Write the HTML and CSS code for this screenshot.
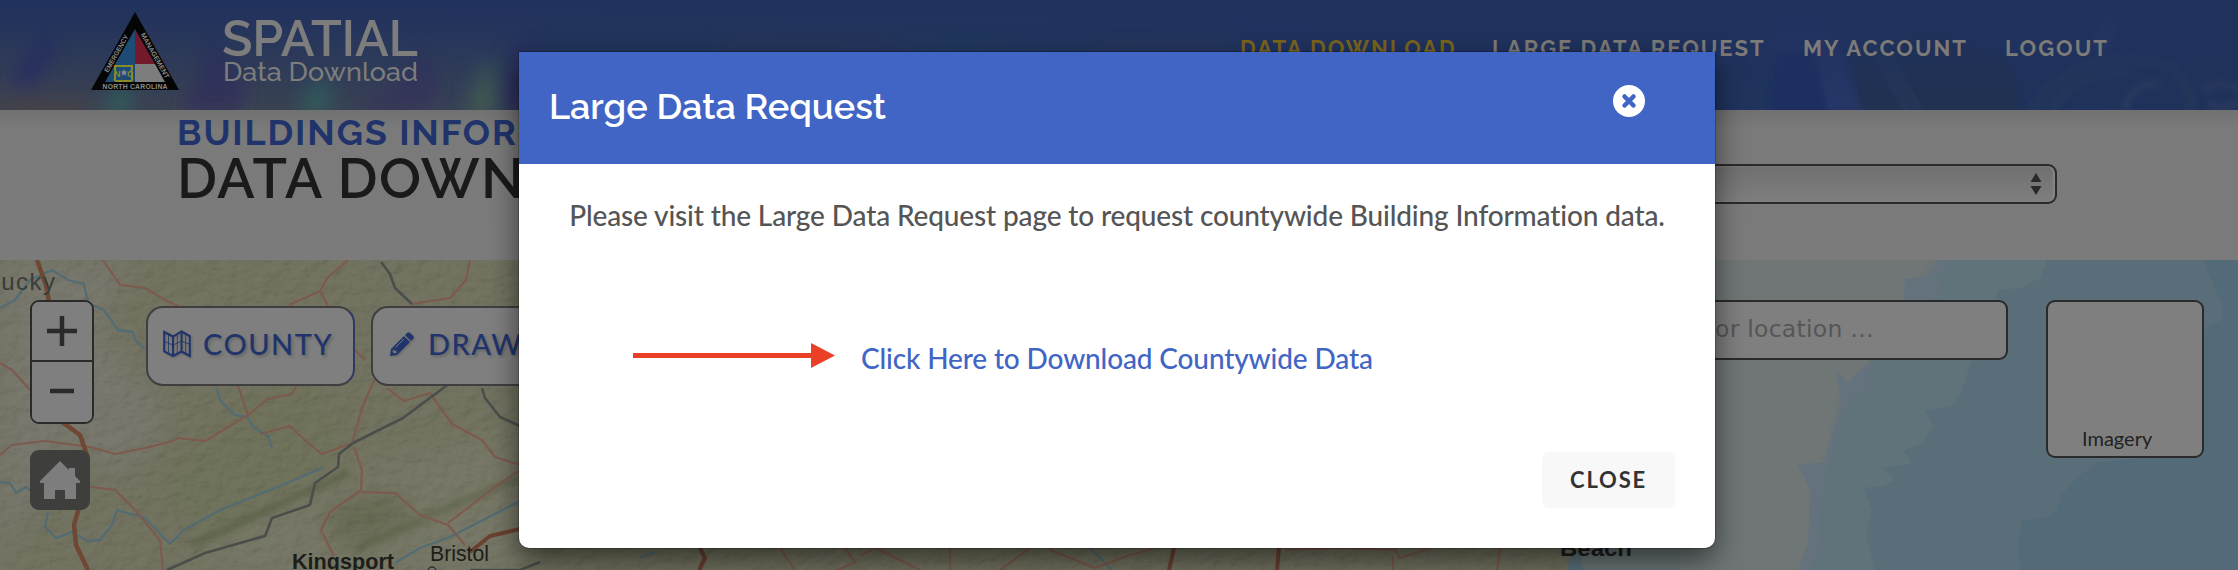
FILE: index.html
```html
<!DOCTYPE html>
<html lang="en">
<head>
<meta charset="utf-8">
<title>Spatial Data Download</title>
<link rel="stylesheet" href="styles.css">
</head>
<body>
<div class="page">
  <header class="site-header">
    <svg class="header-art" viewBox="0 0 2238 110" preserveAspectRatio="none" aria-hidden="true">
      <defs>
        <filter id="soft"><feGaussianBlur stdDeviation="9"/></filter>
        <filter id="soft2"><feGaussianBlur stdDeviation="3"/></filter>
        <linearGradient id="tint" x1="0" y1="0" x2="0" y2="1">
          <stop offset="0" stop-color="#20315e"/><stop offset=".25" stop-color="#20315e" stop-opacity=".8"/><stop offset="1" stop-color="#20315e" stop-opacity="0"/>
        </linearGradient>
        <linearGradient id="base" x1="0" x2="1">
          <stop offset="0" stop-color="#3c4350"/><stop offset=".2" stop-color="#384254"/><stop offset=".4" stop-color="#283e5a"/><stop offset=".53" stop-color="#1f3560"/><stop offset="1" stop-color="#20325a"/>
        </linearGradient>
      </defs>
      <rect width="2238" height="110" fill="url(#base)"/>
      <g filter="url(#soft)">
        <path d="M10 80L45 25L60 45L30 90Z" fill="#2d2d60"/>
        <path d="M0 95H90V120H0Z" fill="#44434a"/>
        <path d="M100 112L118 84L134 84L128 112Z" fill="#31605c"/>
        <path d="M180 112L205 60L210 25L245 80L240 112Z" fill="#363158"/>
        <path d="M300 112L312 78L334 86L325 112Z" fill="#31605c"/>
        <path d="M350 112L390 90L420 40L440 85L425 112Z" fill="#383558"/>
        <path d="M468 112L480 62L496 60L494 112Z" fill="#446150"/>
        <path d="M500 112L512 40L540 30L535 112Z" fill="#2f2f5e"/>
        <path d="M540 20H720V60H540Z" fill="#233c59"/>
        <path d="M720 30H900V60H720Z" fill="#2b3b57"/>
        <path d="M930 30H1000V60H930Z" fill="#21405a"/>
        <path d="M1100 30H1230V60H1100Z" fill="#293c57"/>
      </g>
      <g filter="url(#soft2)">
        <path d="M1775 112L1768 0L1820 0L1862 112Z" fill="#27386b" opacity=".7"/>
        <path d="M1774 50L1815 50L1828 112H1770Z" fill="#1b2d60"/>
        <path d="M1850 50L1935 30L2010 60L2020 112H1862Z" fill="#23314e" opacity=".8"/>
        <path d="M1885 50L1920 112M1870 40L1908 112" stroke="#293b5c" stroke-width="4" fill="none"/>
        <path d="M2092 45L2102 17L2120 20L2106 50Z" fill="#2e3d6a"/>
        <path d="M2030 112Q2080 40 2170 66Q2195 90 2190 112M2050 112Q2080 66 2130 72" stroke="#293a59" stroke-width="8" fill="none" opacity=".6"/>
        <path d="M2125 112Q2130 80 2160 85M2204 90Q2220 78 2240 90M2208 104Q2220 112 2240 102" stroke="#2d3d5d" stroke-width="5" fill="none"/>
      </g>
      <rect width="2238" height="110" fill="url(#tint)"/>
    </svg>
    <div class="brand">
      <svg class="seal" viewBox="0 0 88 78" role="img" aria-label="North Carolina Emergency Management">
        <path d="M44 0L88 78H0Z" fill="#050505"/>
        <path d="M44 17V70H14Z" fill="#1c4c75"/>
        <path d="M44 17V52H64Z" fill="#72192b"/>
        <path d="M44 52H64L74 70H44Z" fill="#7d7d7d"/>
        <path d="M24 54h17v2q-1 3 0 5v5q1 2-1 3h-15q-2-1-1-3v-4q1-3 0-5z" fill="none" stroke="#8b8b28" stroke-width="2"/>
        <text class="seal-nc" x="23" y="64.500">N</text><text class="seal-nc" x="36" y="64.500">C</text>
        <path d="M33 57l1 2.500h2.500l-2 1.600.8 2.600-2.300-1.500-2.300 1.500.8-2.600-2-1.600h2.500z" fill="#8d8d8d"/>
        <text class="seal-text" x="11.500" y="76.500" textLength="65">NORTH CAROLINA</text>
        <text class="seal-text" transform="translate(17 61) rotate(-60.500)" textLength="42" lengthAdjust="spacingAndGlyphs">EMERGENCY</text>
        <text class="seal-text" transform="translate(49.500 22.500) rotate(60.500)" textLength="51" lengthAdjust="spacingAndGlyphs">MANAGEMENT</text>
      </svg>
      <div class="wordmark"><span class="wordmark-top">SPATIAL</span><span class="wordmark-sub">Data Download</span></div>
    </div>
    <nav class="site-nav">
      <a class="nav-link nav-link-active n1">DATA DOWNLOAD</a>
      <a class="nav-link n2">LARGE DATA REQUEST</a>
      <a class="nav-link n3">MY ACCOUNT</a>
      <a class="nav-link n4">LOGOUT</a>
    </nav>
  </header>

  <section class="title-bar">
    <div class="titles"><h2 class="kicker">BUILDINGS INFORMATION</h2><h1 class="headline">DATA DOWNLOAD</h1></div>
    <div class="picker">
      <svg class="picker-arrows" viewBox="0 0 12 24"><path d="M6 1L11.500 10H.5ZM6 23L11.500 14H.5Z" fill="#2a2a2a"/></svg>
    </div>
  </section>

  <main class="map">
    <svg class="map-art" viewBox="0 260 2238 310" aria-hidden="true">
      <defs>
        <filter id="relief" x="0" y="0" width="1" height="1">
          <feTurbulence type="fractalNoise" baseFrequency=".07 .1" numOctaves="4" seed="8"/>
          <feDiffuseLighting surfaceScale="3" lighting-color="#fff"><feDistantLight azimuth="225" elevation="50"/></feDiffuseLighting>
          <feColorMatrix type="saturate" values="0"/>
        </filter>
        <filter id="haze"><feGaussianBlur stdDeviation="14"/></filter>
        <filter id="ridge"><feGaussianBlur stdDeviation="3"/></filter>
        <filter id="edge"><feGaussianBlur stdDeviation=".7"/></filter>
      </defs>
      <rect y="260" width="1700" height="310" fill="#646550"/>
      <g filter="url(#haze)">
        <path d="M0 260H130L100 330L170 420L120 480L60 440L0 570Z" fill="#6b6b5e"/>
        <path d="M230 400L320 360L350 480L200 560L160 480Z" fill="#62654c"/>
        <path d="M170 570L350 470L520 430V570Z" fill="#6a6a59"/>
        <path d="M320 510L390 490L420 520L340 550Z" fill="#545b41"/>
      </g>
      <rect y="260" width="1700" height="310" filter="url(#relief)" opacity=".1"/>
      <g fill="none" stroke-linejoin="round">
        <g filter="url(#ridge)" stroke="#535a3d" stroke-width="6">
          <path d="M190 545L300 495L350 472" opacity=".7"/>
          <path d="M355 550L430 515L520 478" opacity=".6"/>
        </g>
        <g filter="url(#edge)">
          <g stroke="#536c73" stroke-width="2.300">
            <path d="M0 308L15 300L30 280L52 270L68 280L84 284L88 303L104 310L118 330L133 332L135 340L145 349"/>
            <path d="M217 388L220 400L235 415L247 417L254 428L268 436L272 448"/>
            <path d="M0 482L10 483L16 493L26 487L34 494M48 512L45 527L56 538L72 532L88 541L100 540L112 525L117 510L145 518L170 544L184 530L220 510L270 490L323 468"/>
            <path d="M395 563L420 548L450 537L520 501M640 558L655 552M1090 548L1112 570"/>
          </g>
          <g stroke="#7d5a4d" stroke-width="2.200">
            <path d="M103 260L120 285L145 288L165 300L180 307M348 260L328 277L320 291L289 305M320 291L328 306M470 260L466 280L450 298L412 304"/>
            <path d="M0 363L12 370L32 392M0 455L12 445L45 441L90 447L115 454L145 448L173 441L178 438L205 441L248 415L268 399L292 394L300 380M238 386L248 415M90 487L115 490L135 510L160 540L163 570"/>
            <path d="M260 434L290 426L308 443L322 454L352 443L362 408L374 380M354 447L362 470L361 490L330 512L321 530L334 556M361 492L395 493L420 515L448 525L465 545M387 388L404 401L430 393L452 424L482 440L495 457L520 465M520 470L495 487L448 523M355 350L365 360"/>
            <path d="M780 548L795 570M845 548L855 562L838 570M860 556L875 548L920 570M1000 570L1030 548M1050 550L1095 568L1130 555L1155 548M1285 550L1340 548L1395 550L1400 558L1430 548M1393 556V570M1500 548L1497 570M950 548V570"/>
          </g>
          <path d="M412 304L395 288L390 274L381 262M520 426L500 417L485 398L482 388M450 383L403 418L353 443L339 454L338 467L315 483L310 505L272 518L265 536L205 553L167 570M470 570H520L540 562" stroke="#4c4e4b" stroke-width="2.600"/>
          <path d="M37 260L46 285L49 302M62 422L80 435L87 455L84 490L74 525L76 545L88 570" stroke="#6f4634" stroke-width="4.500"/>
          <path d="M470 552L490 536L520 529M700 548L705 558L699 570M1174 548L1169 570M1279 548L1277 570" stroke="#6b4131" stroke-width="4"/>
        </g>
      </g>
      <path d="M1572 570L1580 548L1600 500L1640 420L1670 260H2238V570Z" fill="#6b7576"/>
      <g filter="url(#edge)">
        <path d="M1932 260L1915 280L1905 300L1870 360L1850 380L1838 395L1825 455L1812 480L1815 500L1808 540L1798 570H1680V260Z" fill="#707676"/>
        <path d="M1938 260L1928 276L1905 279L1903 305L1870 362L1848 383L1836 370L1841 400L1825 462L1797 465L1810 488L1808 545L1798 570H2238V260Z" fill="#63727d"/>
        <path d="M1950 260L1938 278L1945 292L1932 302L1880 360L1868 372L1872 385L1850 400L1845 415L1832 450L1824 490L1820 545L1812 570H2238V260Z" fill="#61727a"/>
        <path d="M2047 260L2040 278L2020 288L1998 290L1992 310L1970 365L1960 395L1950 406L1925 410L1933 425L1922 443L1903 450L1912 463L1883 468L1895 480L1883 486L1863 488L1872 510L1866 535L1875 570H2238V260Z" fill="#5a6e79"/>
        <path d="M2203 260L2222 305L2223 320L2207 326L2180 455L2100 462L2080 475L2061 495L2057 510L2045 518L2022 520L2018 545L2020 570H2238V260Z" fill="#526b78"/>
        <path d="M2170 260H2203L2222 312L2207 326L2170 360Z" fill="#5a6e79"/>
      </g>
      <path d="M1567 570L1572 548H1580L1583 570" fill="#5b7179"/>
      <g class="place-names">
        <text class="place state" x="-7" y="290">tucky</text>
        <text class="place strong" x="292" y="569" textLength="102" lengthAdjust="spacingAndGlyphs">Kingsport</text>
        <text class="place" x="430" y="561" textLength="59" lengthAdjust="spacingAndGlyphs">Bristol</text>
        <text class="place strong" x="1560" y="556" textLength="72" lengthAdjust="spacingAndGlyphs">Beach</text>
      </g>
      <circle cx="432" cy="571" r="4" fill="#777" stroke="#333" stroke-width="1.500"/>
    </svg>

    <div class="map-left">
      <div class="zoom-box">
        <button class="zoom-btn"><svg viewBox="0 0 30 30"><path d="M15 0V30M0 15H30" stroke="#2a2a2a" stroke-width="4.500"/></svg></button>
        <button class="zoom-btn zoom-out"><svg viewBox="0 0 30 30"><path d="M3 15H27" stroke="#2a2a2a" stroke-width="4.700"/></svg></button>
      </div>
      <button class="home-btn"><svg viewBox="0 0 40 38"><path d="M20 0L29 9V7H35V15L40 20V22H36V38H25V29H15V38H4V22H0V20Z" fill="#7d7d7d"/></svg></button>
    </div>
    <div class="map-tools">
      <button class="tool">
        <svg class="tool-icon" viewBox="0 0 28 28" fill="none" stroke="#20346b"><path d="M1.200 2L10 6.500L18.500 1.500L26.800 6V26L18.500 21.500L10 26L1.200 21.500ZM10 6.500V26M18.500 1.500V21.500" stroke-width="2"/><path d="M1.500 11.500L10 15L18.500 11L27 14.500M5.500 4V23.500M14.300 4V23.500M22.700 4V23.500" stroke-width=".8"/></svg>
        <span>COUNTY</span>
      </button>
      <button class="tool tool-draw">
        <svg class="pencil-icon" viewBox="0 0 24 24"><path d="M17 1Q18.500-.5 20 1L23.300 4Q24.500 5.500 23 7L21 9L15 3ZM14 4L20 10L7 23L0 24L1 17ZM3 17.500L2.500 20L4.500 21.500L6.500 21V18.500H4.500Z" fill="#20346b" fill-rule="evenodd"/><path d="M5.500 15.500L14 7" stroke="#6f7686" stroke-width="1"/></svg>
        <span>DRAW</span>
      </button>
    </div>
    <div class="map-right">
      <div class="search"><span>Find address or location …</span></div>
      <div class="basemap"><span>Imagery</span></div>
    </div>
  </main>

  <div class="modal" role="dialog">
    <div class="modal-head">
      <h3 class="modal-title">Large Data Request</h3>
      <svg class="modal-x" viewBox="0 0 32 32"><circle cx="16" cy="16" r="16" fill="#fff"/><path d="M11.500 11.500L20.500 20.500M20.500 11.500L11.500 20.500" stroke="#4165c5" stroke-width="4.500" stroke-linecap="round"/></svg>
    </div>
    <div class="modal-body">
      <p class="modal-text">Please visit the Large Data Request page to request countywide Building Information data.</p>
      <div class="modal-action">
        <svg class="arrow" viewBox="0 0 202 25"><path d="M0 10H178V0L202 12.500L178 25V15H0Z" fill="#ea4025"/></svg>
        <a class="modal-link">Click Here to Download Countywide Data</a>
      </div>
    </div>
    <div class="modal-foot"><button class="close-btn">CLOSE</button></div>
  </div>
</div>
</body>
</html>
```
FILE: styles.css
```css
* { box-sizing: border-box; }
body { margin: 0; font-family: Lato, sans-serif; background: #7b7b7b; }
button { font: inherit; padding: 0; margin: 0; border: 0; }
h1, h2, h3, p { margin: 0; }
svg { display: block; }
.page { position: relative; width: 2238px; height: 570px; overflow: hidden; }

.site-header { position: relative; height: 110px; display: flex; justify-content: space-between; padding: 0 134px 0 91px; overflow: hidden; }
.header-art { position: absolute; inset: 0; width: 100%; height: 100%; }
.brand { position: relative; display: flex; gap: 43px; padding-top: 12px; }
.seal { width: 88px; height: 78px; }
.seal-text { font: bold 6.800px "Liberation Sans", sans-serif; fill: #8c8c8c; }
.seal-nc { font: bold 9px "Liberation Sans", sans-serif; fill: #8b8b28; }
.wordmark { display: flex; flex-direction: column; color: #7d7d7d; font-family: Raleway, Lato, sans-serif; white-space: nowrap; }
.wordmark-top { font-size: 50px; line-height: 44px; font-weight: 600; letter-spacing: -.2px; padding-top: 5px; }
.wordmark-sub { font-size: 27px; line-height: 27px; font-weight: 500; margin-left: 1px; margin-top: -3px; letter-spacing: .05px; }
.site-nav { position: relative; display: flex; padding-top: 34px; white-space: nowrap; }
.nav-link { font: bold 22px/28px Raleway, Lato, sans-serif; color: #7d7b77; letter-spacing: 2px; }
.nav-link-active { color: #79641c; }
.n1 { width: 252px; } .n2 { width: 311px; } .n3 { width: 202px; } .n4 { width: 99px; }

.title-bar { height: 150px; display: flex; justify-content: space-between; align-items: flex-start; padding: 0 181px 0 177px; background: linear-gradient(#717171, #7a7a7a 20px, #7b7b7b); }
.titles { white-space: nowrap; font-family: Raleway, Lato, sans-serif; }
.kicker { font-size: 36px; line-height: 44px; font-weight: 700; color: #20346b; letter-spacing: 1.900px; }
.headline { font-size: 56px; line-height: 48px; font-weight: 600; color: #1a1a1a; letter-spacing: 1.400px; }
.picker { width: 900px; height: 40px; margin-top: 54px; border: 2px solid #2a2a2a; border-radius: 9px; display: flex; align-items: center; justify-content: flex-end; padding-right: 13px; background: linear-gradient(#707070, #7e7e7e); box-shadow: inset -2px 0 2px #888; }
.picker-arrows { width: 12px; height: 24px; }

.map { position: relative; height: 310px; display: flex; padding: 40px 34px 0 30px; }
.map-art { position: absolute; inset: 0; width: 2238px; height: 310px; }
.place { font: 22px "Liberation Sans", sans-serif; fill: #1d1d19; }
.strong { font-weight: 700; }
.state { fill: #3c3c37; letter-spacing: 1.500px; font-size: 24px; }
.map-left, .map-tools, .map-right { position: relative; }
.map-left { width: 114px; }
.zoom-box { width: 64px; height: 124px; border: 2px solid #2a2a2a; border-radius: 9px; overflow: hidden; background: #7f7f7f; }
.zoom-btn { display: flex; align-items: center; justify-content: center; width: 60px; height: 58px; background: #7f7f7f; }
.zoom-btn svg { width: 30px; height: 30px; }
.zoom-out { height: 62px; border-top: 2px solid #2a2a2a; padding-bottom: 3px; }
.home-btn { width: 60px; height: 60px; margin-top: 26px; border-radius: 9px; background: #3e3e3c; display: flex; justify-content: center; align-items: center; }
.home-btn svg { width: 40px; height: 38px; }
.map-tools { display: flex; gap: 16px; padding: 6px 0 0 2px; align-items: flex-start; }
.tool { height: 80px; width: 209px; border: 2px solid #3f3f42; border-right-color: #2b3a66; border-radius: 17px; background: #7f7f7f; display: flex; align-items: center; padding: 0 0 5px 15px; gap: 12px; color: #20346b; font-size: 29px; font-weight: 500; letter-spacing: 1.500px; text-shadow: 2px 2px 3px #5559; }
.tool-icon { width: 28px; height: 28px; filter: drop-shadow(1px 1px 1px #5559); }
.pencil-icon { width: 24px; height: 24px; filter: drop-shadow(1px 1px 1px #5559); }
.tool-draw { padding-left: 17px; gap: 14px; }
.map-right { margin-left: auto; display: flex; gap: 38px; align-items: flex-start; }
.search { width: 600px; height: 60px; border: 2px solid #2a2a2a; border-radius: 9px; background: #7f7f7f; display: flex; align-items: center; justify-content: flex-end; padding: 0 132px 2px 0; font: 23.500px "DejaVu Sans", sans-serif; letter-spacing: .25px; color: #565656; }
.basemap { width: 158px; height: 158px; border: 2px solid #2a2a2a; border-radius: 9px; background: #7f7f7f; display: flex; align-items: flex-end; padding: 0 0 6px 34px; font-size: 20px; color: #222; }

.modal { position: absolute; left: 519px; top: 52px; width: 1196px; height: 496px; display: flex; flex-direction: column; background: #fff; border-radius: 0 0 10px 10px; box-shadow: 0 0 0 1px #0003, 0 12px 30px rgba(0,0,0,.55); }
.modal-head { height: 112px; background: #4165c5; display: flex; justify-content: space-between; padding: 33px 70px 0 30px; }
.modal-title { font: 600 36px/42px Raleway, Lato, sans-serif; color: #fff; }
.modal-x { width: 32px; height: 32px; }
.modal-body { flex: 1; color: #555; font-size: 28px; font-weight: 500; white-space: nowrap; letter-spacing: -.14px; }
.modal-text { margin-top: 33px; line-height: 36px; text-align: center; }
.modal-action { display: flex; align-items: flex-start; margin: 107px 0 0 114px; line-height: 36px; }
.arrow { width: 202px; height: 25px; margin: 3px 26px 0 0; }
.modal-link { color: #4165c5; }
.modal-foot { display: flex; justify-content: flex-end; padding: 0 40px 40px; }
.close-btn { width: 133px; height: 56px; padding-bottom: 1px; border-radius: 7px; background: #f8f8f8; color: #333; font-size: 22px; font-weight: 700; letter-spacing: 1.800px; }
```
